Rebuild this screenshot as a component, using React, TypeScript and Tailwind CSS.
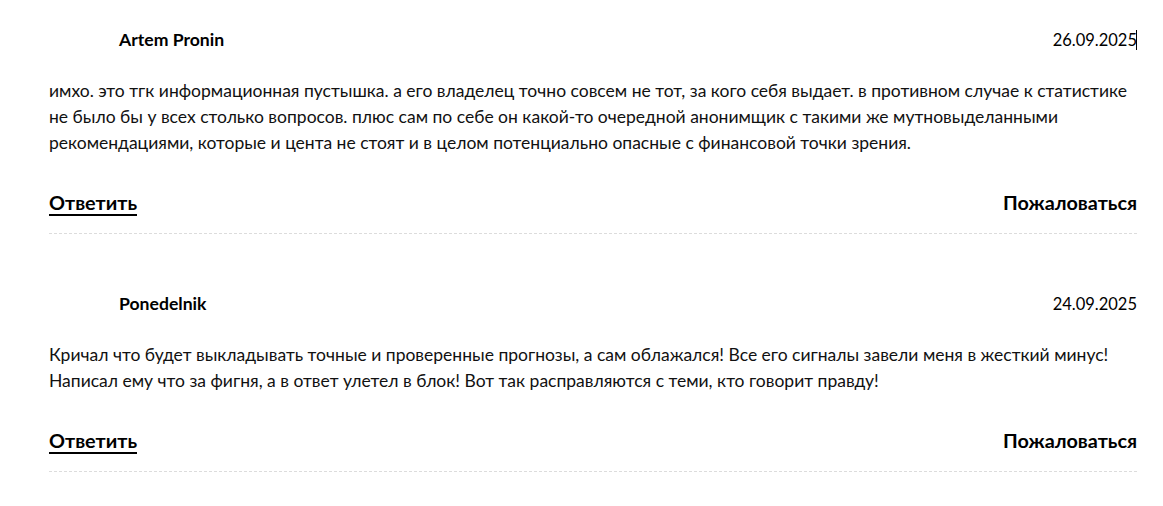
import React from 'react';

interface Comment {
  id: number;
  author: string;
  date: string;
  text: string;
  caret?: boolean;
}

const comments: Comment[] = [
  {
    id: 1,
    author: 'Artem Pronin',
    date: '26.09.2025',
    caret: true,
    text: 'имхо. это тгк информационная пустышка. а его владелец точно совсем не тот, за кого себя выдает. в противном случае к статистике не было бы у всех столько вопросов. плюс сам по себе он какой-то очередной анонимщик с такими же мутновыделанными рекомендациями, которые и цента не стоят и в целом потенциально опасные с финансовой точки зрения.',
  },
  {
    id: 2,
    author: 'Ponedelnik',
    date: '24.09.2025',
    text: 'Кричал что будет выкладывать точные и проверенные прогнозы, а сам облажался! Все его сигналы завели меня в жесткий минус! Написал ему что за фигня, а в ответ улетел в блок! Вот так расправляются с теми, кто говорит правду!',
  },
];

function CommentItem({ comment }: { comment: Comment }) {
  return (
    <div className="pt-5 pb-[18px] border-b border-dashed border-[#dcdcdc]">
      <div className="flex items-center justify-between h-10">
        <div className="flex items-center gap-[30px]">
          <div className="w-10 h-10" />
          <span className="text-[17.6px] font-bold text-black">{comment.author}</span>
        </div>
        <span className="text-[16.5px] text-black flex items-center">
          {comment.date}
          {comment.caret && <span className="inline-block w-px h-5 bg-black -ml-px" />}
        </span>
      </div>
      <p className="mt-[18px] text-[17.5px] leading-[26px] text-[#111]">{comment.text}</p>
      <div className="mt-[33px] flex items-center justify-between leading-[26px]">
        <a className="text-[19.8px] font-bold text-black underline underline-offset-[4px] decoration-2 cursor-pointer">
          Ответить
        </a>
        <a className="text-[19.8px] font-bold text-black cursor-pointer">Пожаловаться</a>
      </div>
    </div>
  );
}

export default function App() {
  return (
    <div className="min-h-screen bg-white" style={{ fontFamily: 'Lato, "Noto Sans", sans-serif' }}>
      <div className="ml-[49px] w-[1088px] flex flex-col gap-[30px]">
        {comments.map((c) => (
          <CommentItem key={c.id} comment={c} />
        ))}
      </div>
    </div>
  );
}
